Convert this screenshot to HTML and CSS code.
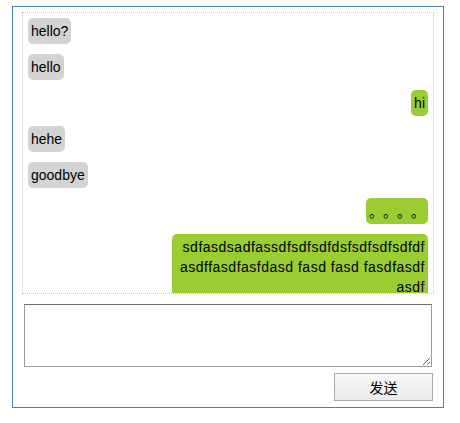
FILE: index.html
```html
<!DOCTYPE html>
<html lang="zh">
<head>
<meta charset="utf-8">
<title>Chat</title>
<link rel="stylesheet" href="styles.css">
</head>
<body>
<div class="chat-box">
  <div class="messages">
    <div class="msg left"><span class="bubble">hello?</span></div>
    <div class="msg left"><span class="bubble">hello</span></div>
    <div class="msg right"><span class="bubble">hi</span></div>
    <div class="msg left"><span class="bubble">hehe</span></div>
    <div class="msg left"><span class="bubble">goodbye</span></div>
    <div class="msg right"><span class="bubble cjk">。。。。</span></div>
    <div class="msg right"><span class="bubble wide">sdfasdsadfassdfsdfsdfdsfsdfsdfsdfdf<br>asdffasdfasfdasd fasd fasd fasdfasdf<br>asdf</span></div>
  </div>
  <textarea class="input"></textarea>
  <div class="actions">
    <button class="send" type="button">发送</button>
  </div>
</div>
</body>
</html>
```

FILE: styles.css
```css
html, body {
  margin: 0;
  padding: 0;
  background: #fff;
}

body {
  font-family: "Liberation Sans", Arial, "Noto Sans CJK SC", sans-serif;
  font-size: 14px;
  color: #000;
}

.chat-box {
  box-sizing: border-box;
  width: 432px;
  height: 402px;
  margin: 6px 0 0 12px;
  border: 1px solid #4682b4;
  padding: 5px 9px;
}

.messages {
  box-sizing: border-box;
  height: 282px;
  border: 1px dotted #c8c8c8;
  padding: 5px;
  overflow: hidden;
  display: flex;
  flex-direction: column;
  gap: 10px;
}

.msg {
  display: flex;
}

.msg.left {
  justify-content: flex-start;
}

.msg.right {
  justify-content: flex-end;
}

.bubble {
  display: block;
  padding: 3px;
  line-height: 20px;
  border-radius: 5px;
}

.left .bubble {
  background: #d3d3d3;
}

.right .bubble {
  background: #9acd32;
}

.bubble.cjk {
  font-family: "Noto Sans CJK SC", sans-serif;
  text-spacing-trim: space-all;
  font-feature-settings: "halt" 0, "chws" 0;
}

.bubble.wide {
  width: 250px;
  text-align: right;
  letter-spacing: 0.5px;
  white-space: nowrap;
  flex-shrink: 0;
}

.input {
  display: block;
  box-sizing: border-box;
  width: 408px;
  height: 63px;
  margin: 10px 0 0 2px;
  border: 1px solid #9a9a9a;
  border-top-color: #6f6f6f;
  padding: 2px;
  font-family: inherit;
  font-size: 14px;
  background: #fff;
}

.actions {
  display: flex;
  justify-content: flex-end;
  margin-top: 6px;
  padding-right: 1px;
}

.send {
  box-sizing: border-box;
  width: 99px;
  height: 28px;
  border: 1px solid #aaaaaa;
  background: linear-gradient(#f7f7f7, #ebebeb);
  font-family: "Noto Sans CJK SC", sans-serif;
  font-size: 14px;
  color: #000;
  padding: 0;
}
```
